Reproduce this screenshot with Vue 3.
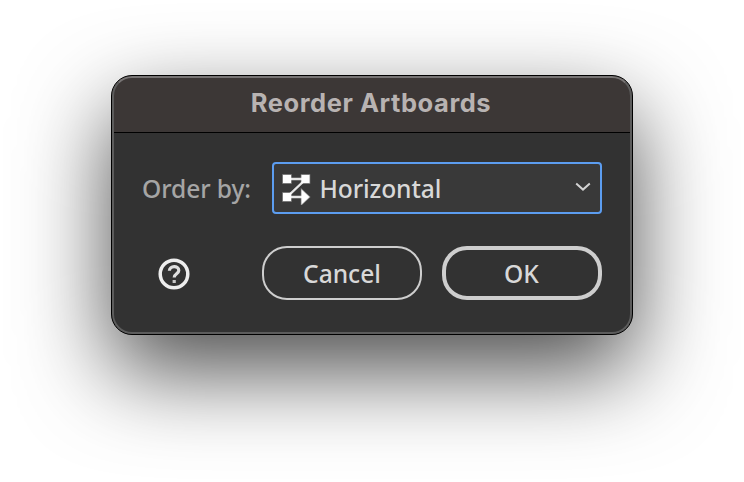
<script setup>
import { ref } from 'vue'

const title = 'Reorder Artboards'
const order = ref('Horizontal')
</script>

<template>
  <main class="stage">
    <section class="dialog" role="dialog" :aria-label="title">
      <header class="titlebar">{{ title }}</header>
      <div class="content">
        <div class="row">
          <span class="label">Order by:</span>
          <button class="select" type="button">
            <svg class="order-icon" width="30" height="34" viewBox="0 0 30 34">
              <path d="M5 8H24L5 26H22" fill="none" stroke="#e6e6e6" stroke-width="2.4" />
              <path d="M1 4h8v8H1zM19.5 4h8v8h-8zM1 22h8v8H1zM19.5 18.5l8 7.5L19.5 33.5z" fill="#fff" stroke="#fff" stroke-opacity=".45" stroke-width="1.4" />
            </svg>
            <span class="value">{{ order }}</span>
            <svg class="chevron" width="16" height="10" viewBox="0 0 16 10">
              <path d="M1.2 1.6L8 7.6L14.8 1.6" fill="none" stroke="#d2d2d2" stroke-width="2" />
            </svg>
          </button>
        </div>
        <div class="row actions">
          <svg class="help" width="32" height="32" viewBox="0 0 32 32">
            <circle cx="16" cy="16" r="13.8" fill="none" stroke="#ededed" stroke-width="3.5" />
            <path d="M11.4 12.8C11.4 7.4 20.8 7.2 20.8 12.5C20.8 15.7 16.2 15.8 16.2 19.4" fill="none" stroke="#dedede" stroke-width="3.2" />
            <rect x="14.6" y="22" width="3.2" height="3" fill="#c8c8c8" />
          </svg>
          <button class="button cancel" type="button">Cancel</button>
          <button class="button ok" type="button">OK</button>
        </div>
      </div>
    </section>
  </main>
</template>

<style>
body {
  margin: 0;
  background: #fff;
}
</style>

<style scoped>
.stage {
  box-sizing: border-box;
  width: 744px;
  height: 482px;
  padding: 75px 111px;
  overflow: hidden;
  font-family: "Noto Sans", sans-serif;
  font-size: 24.6px;
  font-weight: 500;
}
.dialog {
  position: relative;
  box-sizing: border-box;
  width: 522px;
  height: 260px;
  border: 1px solid #000;
  border-radius: 21px;
  background: #323232;
  overflow: hidden;
  box-shadow: 0 36px 90px rgba(0, 0, 0, 0.7);
}
/* Light rim drawn over the title bar and content */
.dialog::after {
  content: "";
  position: absolute;
  inset: 0;
  border: 2px solid #5c5c5c;
  border-top-color: #777474;
  border-radius: 20px;
  pointer-events: none;
}
.titlebar {
  box-sizing: border-box;
  height: 57px;
  padding-right: 2px;
  border-bottom: 1px solid #000;
  background: #3c3736;
  color: #b8b3b2;
  font-family: Inter, sans-serif;
  font-size: 25.5px;
  font-weight: 700;
  letter-spacing: 0.56px;
  line-height: 54px;
  text-align: center;
}
.content {
  display: flex;
  flex-direction: column;
  gap: 32px;
  padding: 29px 30px 0;
}
.row {
  display: flex;
  align-items: center;
}
.label {
  box-sizing: border-box;
  width: 130px;
  height: 52px;
  padding-top: 1px;
  color: #a5a5a5;
  letter-spacing: -0.1px;
  line-height: 52px;
  white-space: nowrap;
}
.select {
  box-sizing: border-box;
  display: flex;
  align-items: center;
  width: 330px;
  height: 52px;
  padding: 0 9px 0 8px;
  border: 2px solid #5c9df0;
  border-radius: 4px;
  background: #393939;
  color: #d8d8d8;
  font: inherit;
  letter-spacing: -0.1px;
  text-align: left;
}
.value {
  flex: 1;
  padding-left: 7.5px;
}
.chevron {
  margin-top: -3px;
}
.actions {
  gap: 20px;
}
.help {
  margin: 2px auto 0 16px;
}
.button {
  box-sizing: border-box;
  width: 160px;
  height: 54px;
  padding: 0;
  border: 2px solid #cecece;
  border-radius: 25px;
  background: transparent;
  color: #d8d8d8;
  font: inherit;
}
.ok {
  padding-right: 1px;
  border-width: 4px;
}
</style>
